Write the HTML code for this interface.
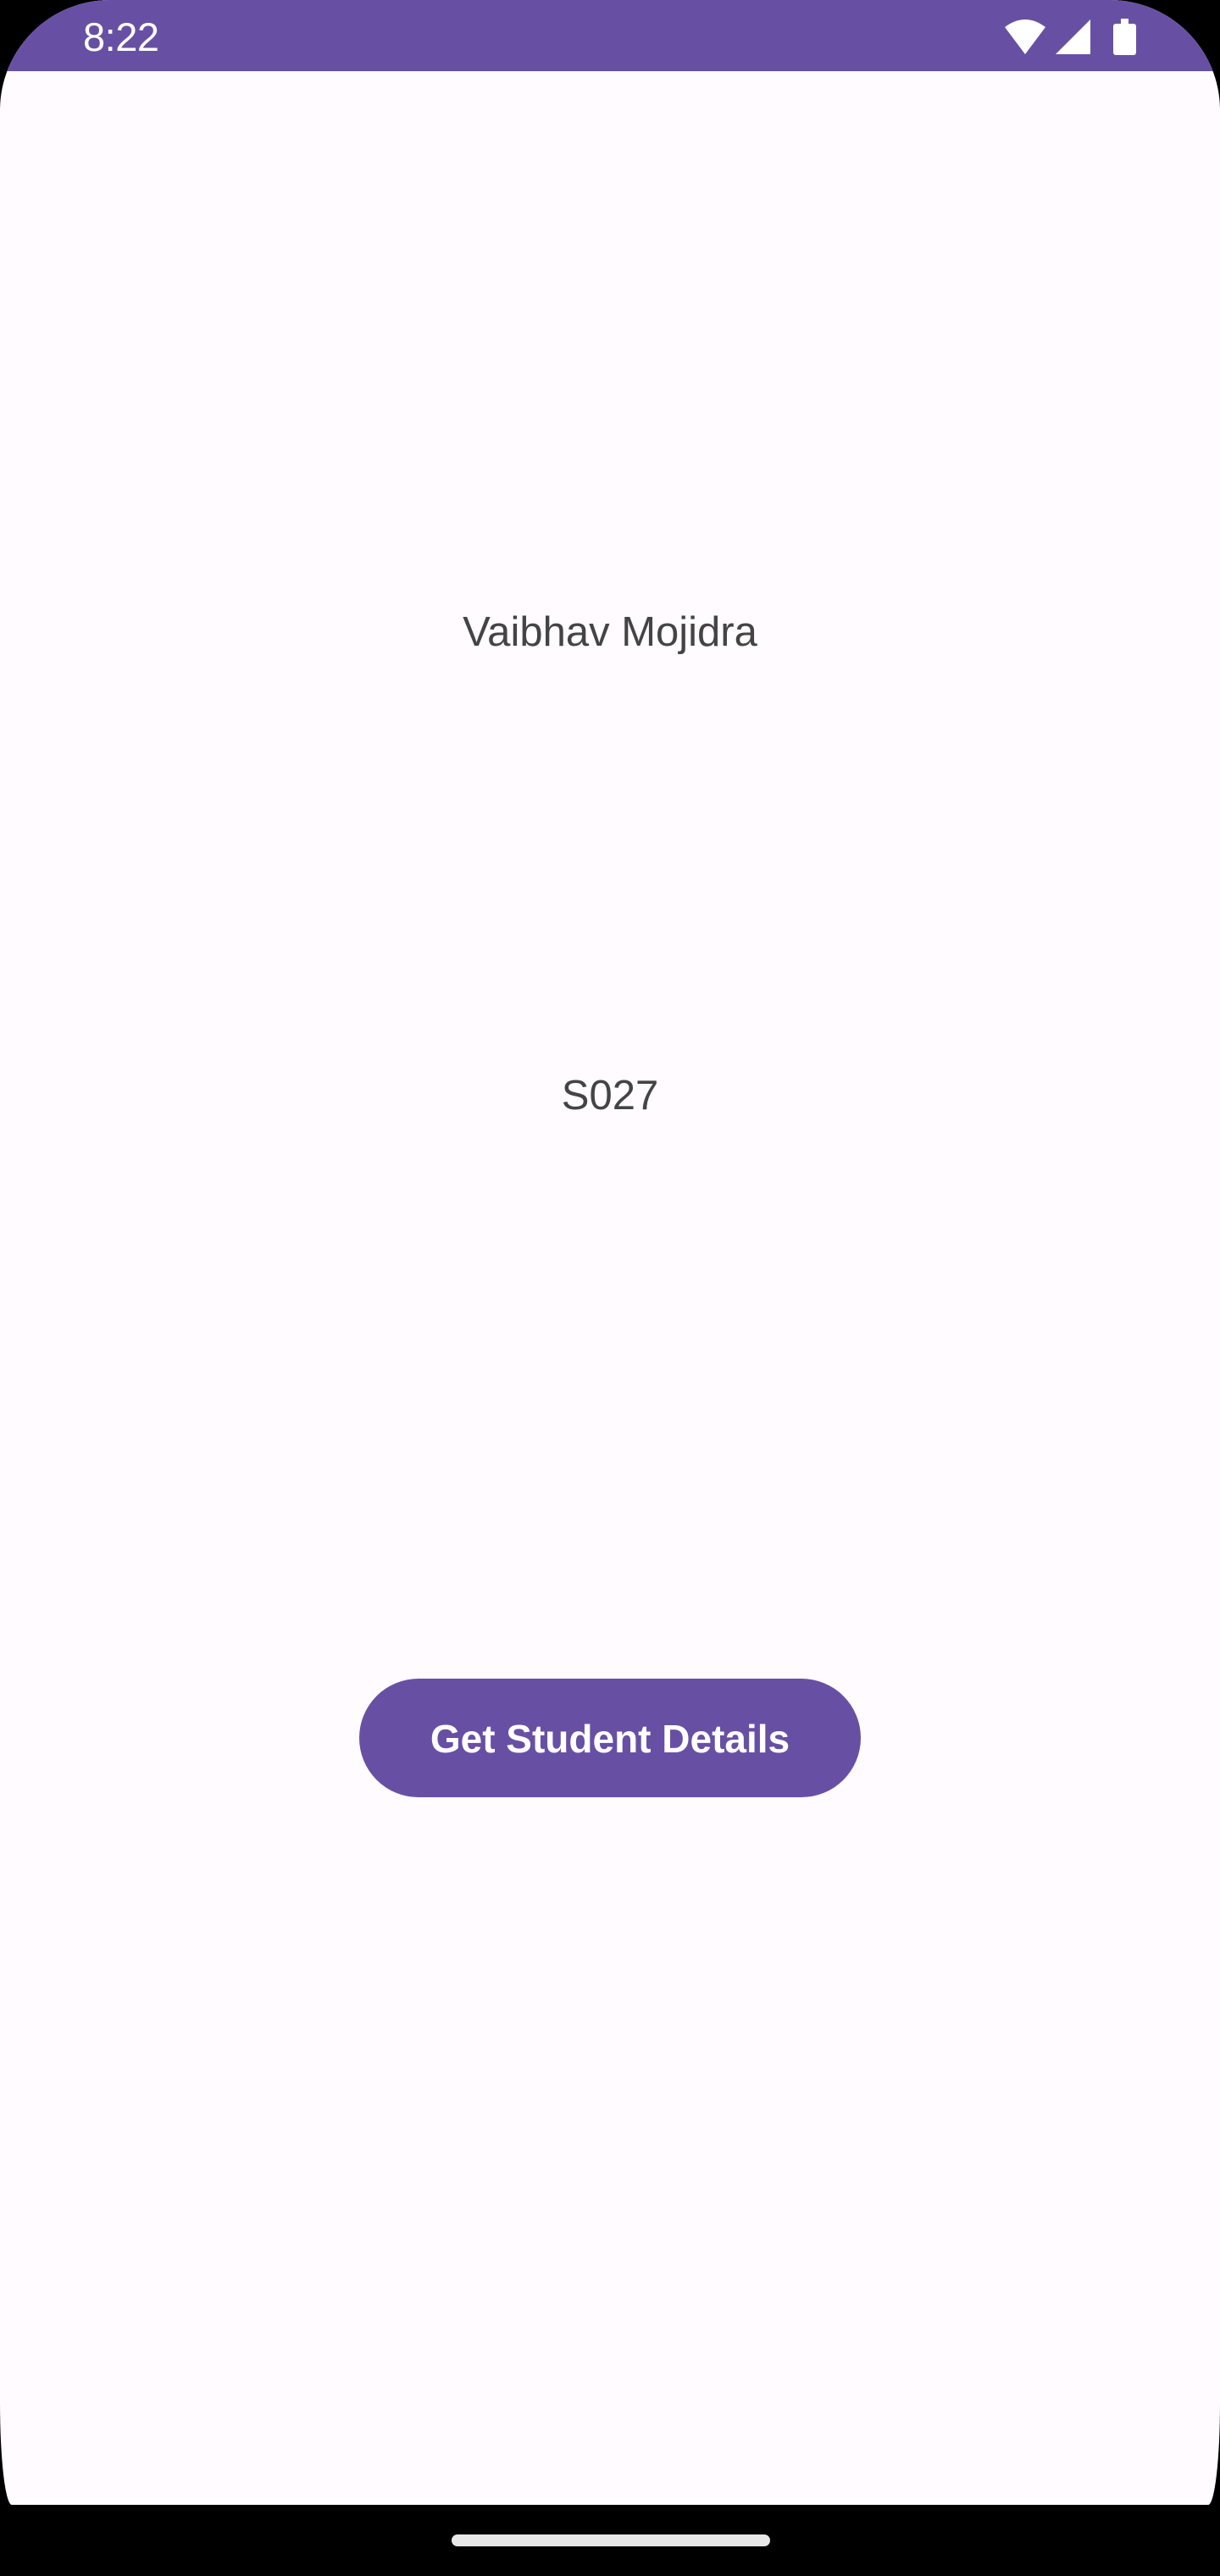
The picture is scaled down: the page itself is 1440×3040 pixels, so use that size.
<!DOCTYPE html>
<html><head><meta charset="utf-8"><style>
html,body{margin:0;padding:0;background:#000;width:1440px;height:3040px;overflow:hidden;font-family:"Liberation Sans",sans-serif;}
.screen{position:absolute;left:0;top:0;width:1440px;height:2956px;background:#fffbfe;border-radius:130px 130px 14px 14px/130px 130px 120px 120px;overflow:hidden;}
.status{position:absolute;left:0;top:0;width:1440px;height:84px;background:#6750a4;}
.time{position:absolute;left:98px;top:16px;color:#fff;font-size:47px;letter-spacing:-0.5px;}
.t{position:absolute;left:0;width:1440px;text-align:center;color:#444;font-size:49px;}
.btn{position:absolute;left:424px;top:1981px;width:592px;height:140px;border-radius:70px;background:#6750a4;color:#fff;font-size:46px;font-weight:bold;text-align:center;line-height:142px;}
.pill{position:absolute;left:533px;top:2991px;width:376px;height:14px;border-radius:7px;background:#e8e8e8;}
</style></head><body>
<div class="screen">
<div class="status">
<svg style="position:absolute;left:1180px;top:20px" width="170" height="48" viewBox="0 0 170 48">
<path d="M30 44 L6 12 Q30 -6 54 12 Z" fill="#fff"/>
<path d="M66 44 L107 44 L107 3 Z" fill="#fff"/>
<rect x="134" y="8" width="27" height="37" rx="3" fill="#fff"/>
<rect x="143" y="2" width="9" height="8" fill="#fff"/>
</svg>
<div class="time">8:22</div>
</div>
<div class="t" style="top:718px">Vaibhav Mojidra</div>
<div class="t" style="top:1265px">S027</div>
<div class="btn">Get Student Details</div>
</div>
<div class="pill"></div>
</body></html>
